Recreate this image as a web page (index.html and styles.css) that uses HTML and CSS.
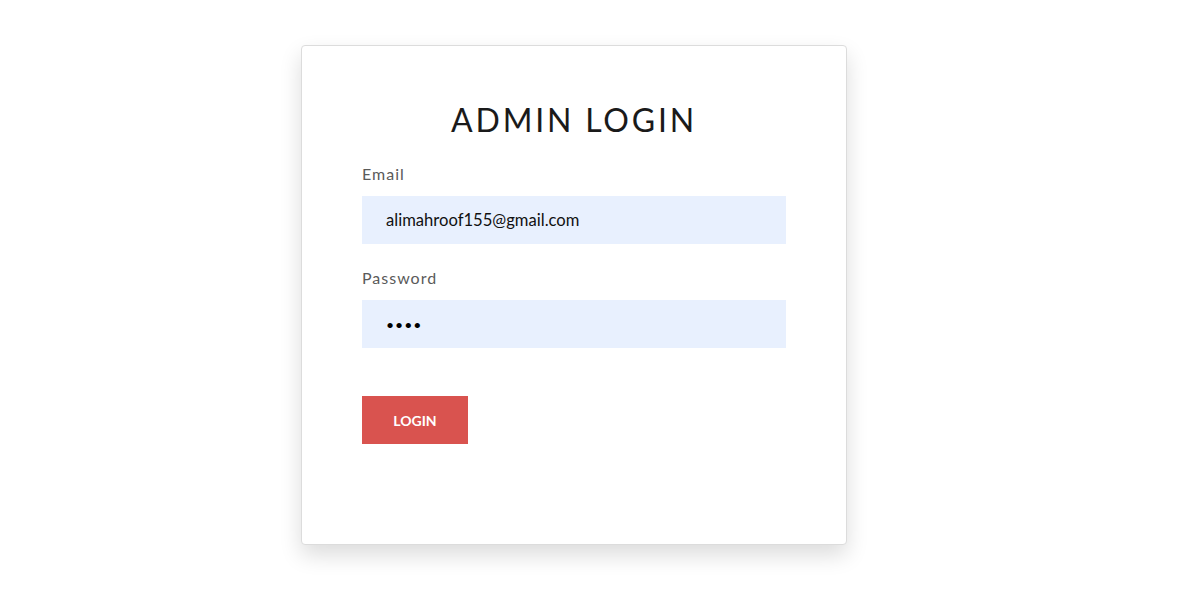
FILE: index.html
```html
<!DOCTYPE html>
<html>
<head>
<meta charset="utf-8">
<link rel="stylesheet" href="styles.css">
</head>
<body>
<div class="page">
  <div class="card">
    <h1 class="title">ADMIN LOGIN</h1>
    <form class="form">
      <label class="label">Email</label>
      <div class="input">alimahroof155@gmail.com</div>
      <label class="label">Password</label>
      <div class="input pw">••••</div>
      <button type="button" class="btn">LOGIN</button>
    </form>
  </div>
</div>
</body>
</html>
```
FILE: styles.css
```css
* { box-sizing: border-box; }
html, body { margin: 0; padding: 0; background: #fff; }
body { font-family: Lato, "Open Sans", sans-serif; }
.page { padding: 45px 0 50px 301px; }
.card {
  width: 546px;
  height: 500px;
  border: 1px solid #dcdcdc;
  border-radius: 4px;
  background: #fff;
  box-shadow: 0 10px 22px rgba(0,0,0,0.14);
  padding: 54px 60px 0;
}
.title {
  margin: 0;
  text-align: center;
  font-weight: 400;
  font-size: 32px;
  letter-spacing: 2.8px;
  color: #1a1a1a;
  line-height: 40px;
}
.form { display: flex; flex-direction: column; margin-top: 24px; }
.label {
  font-size: 16px;
  letter-spacing: 1px;
  color: #5a5a5a;
  line-height: 20px;
  margin-bottom: 12px;
}
.input {
  height: 48px;
  background: #e8f0fe;
  padding-left: 24px;
  display: flex;
  align-items: center;
  font-size: 16.6px;
  color: #111;
  margin-bottom: 24px;
}
.pw { font-size: 14px; letter-spacing: 1px; color: #000; }
.btn {
  align-self: flex-start;
  margin-top: 24px;
  width: 106px;
  height: 48px;
  border: none;
  background: #d9534f;
  color: #fff;
  font-family: inherit;
  font-weight: 700;
  font-size: 14px;
}
```
